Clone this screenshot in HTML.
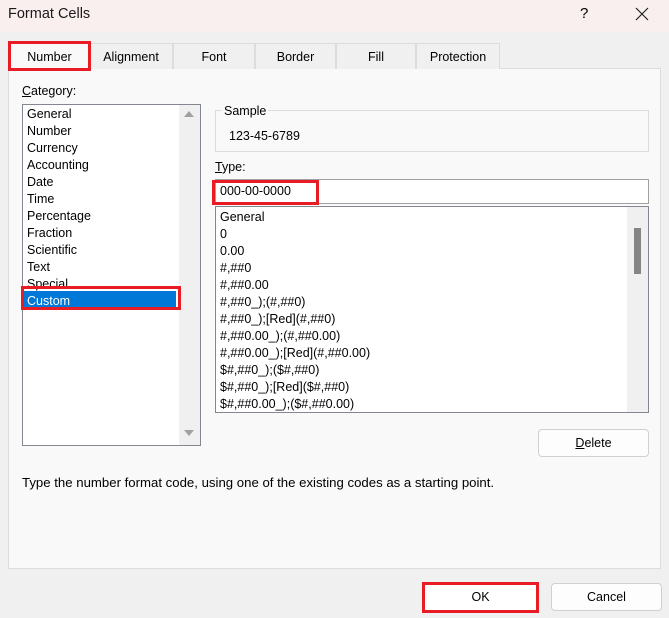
<!DOCTYPE html><html><head><style>
*{margin:0;padding:0;box-sizing:border-box}
body{width:669px;height:618px;background:#f0f0f0;font-family:"Liberation Sans",sans-serif;font-size:12.5px;color:#000;position:relative;overflow:hidden}
.a{position:absolute;white-space:nowrap}
.tab{position:absolute;top:43px;height:26px;border:1px solid #dcdcdc;border-bottom:none;background:#f0f0f0;text-align:center;line-height:26px;font-size:12.5px}
.red{position:absolute;border:3px solid #e81c24}
</style></head><body>
<div class="a" style="left:0;top:0;width:669px;height:32px;background:#f9efef"></div>
<div class="a" style="left:8px;top:6px;font-size:14.5px;color:#1a1a1a">Format Cells</div>
<div class="a" style="left:580px;top:5px;font-size:15px">?</div>
<svg class="a" style="left:635px;top:7px" width="14" height="14"><path d="M1 1L13 13M13 1L1 13" stroke="#222" stroke-width="1.2"/></svg>
<div class="a" style="left:8px;top:68px;width:653px;height:501px;background:#f9f9f9;border:1px solid #dcdcdc"></div>
<div class="tab" style="left:10px;width:79px;background:#f9f9f9;height:27px">Number</div>
<div class="tab" style="left:89px;width:84px">Alignment</div>
<div class="tab" style="left:173px;width:82px">Font</div>
<div class="tab" style="left:255px;width:81px">Border</div>
<div class="tab" style="left:336px;width:80px">Fill</div>
<div class="tab" style="left:416px;width:84px">Protection</div>
<div class="red" style="left:8px;top:41px;width:83px;height:30px"></div>
<div class="a" style="left:22px;top:84px"><u>C</u>ategory:</div>
<div class="a" style="left:22px;top:104px;width:179px;height:342px;background:#fff;border:1px solid #828790"></div>
<div class="a" style="left:179px;top:105px;width:21px;height:340px;background:#f0f0f0"></div>
<svg class="a" style="left:183px;top:109px" width="12" height="10"><path d="M1 8L6 2L11 8Z" fill="#a0a0a0"/></svg>
<svg class="a" style="left:183px;top:428px" width="12" height="10"><path d="M1 2L6 8L11 2Z" fill="#a0a0a0"/></svg>
<div class="a" style="left:24px;top:291px;width:152px;height:17px;background:#0078d7"></div>
<div class="a" style="left:27px;top:106px;line-height:17px">General<br>Number<br>Currency<br>Accounting<br>Date<br>Time<br>Percentage<br>Fraction<br>Scientific<br>Text<br>Special<br><span style="color:#fff">Custom</span></div>
<div class="red" style="left:21px;top:286px;width:160px;height:24px"></div>
<div class="a" style="left:215px;top:110px;width:434px;height:42px;border:1px solid #dcdcdc"></div>
<div class="a" style="left:222px;top:104px;background:#f9f9f9;padding:0 2px">Sample</div>
<div class="a" style="left:229px;top:129px">123-45-6789</div>
<div class="a" style="left:215px;top:160px"><u>T</u>ype:</div>
<div class="a" style="left:215px;top:179px;width:434px;height:25px;background:#fff;border:1px solid #a0a0a0"></div>
<div class="a" style="left:220px;top:184px">000-00-0000</div>
<div class="red" style="left:212px;top:180px;width:107px;height:25px"></div>
<div class="a" style="left:215px;top:206px;width:434px;height:207px;background:#fff;border:1px solid #828790"></div>
<div class="a" style="left:627px;top:207px;width:21px;height:205px;background:#f0f0f0"></div>
<div class="a" style="left:634px;top:228px;width:7px;height:46px;background:#858585"></div>
<div class="a" style="left:220px;top:209px;line-height:17px;height:202px;overflow:hidden">General<br>0<br>0.00<br>#,##0<br>#,##0.00<br>#,##0_);(#,##0)<br>#,##0_);[Red](#,##0)<br>#,##0.00_);(#,##0.00)<br>#,##0.00_);[Red](#,##0.00)<br>$#,##0_);($#,##0)<br>$#,##0_);[Red]($#,##0)<br>$#,##0.00_);($#,##0.00)</div>
<div class="a" style="left:538px;top:429px;width:111px;height:28px;background:#fdfdfd;border:1px solid #d0d0d0;border-radius:4px;text-align:center;line-height:26px"><u>D</u>elete</div>
<div class="a" style="left:22px;top:475px;font-size:13.2px">Type the number format code, using one of the existing codes as a starting point.</div>
<div class="a" style="left:422px;top:582px;width:117px;height:31px;background:#fff;border:3px solid #e81c24;text-align:center;line-height:25px">OK</div>
<div class="a" style="left:551px;top:583px;width:111px;height:28px;background:#fdfdfd;border:1px solid #d0d0d0;border-radius:4px;text-align:center;line-height:26px">Cancel</div>
</body></html>
